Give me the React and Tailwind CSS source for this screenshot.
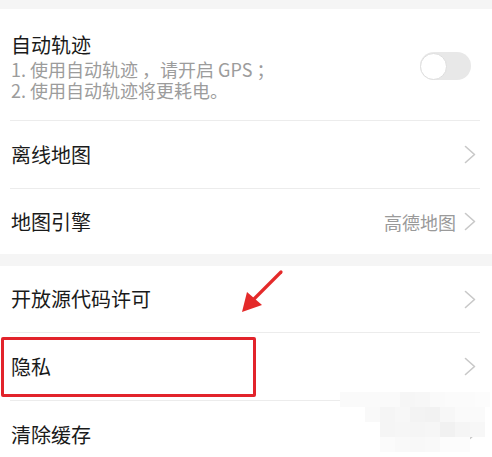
import React from "react";

const font = { fontFamily: '"Noto Sans CJK SC", "Noto Sans", sans-serif' };

function Chevron() {
  return (
    <svg width="12" height="19" viewBox="0 0 12 19" className="shrink-0">
      <path d="M1.5 1.5 L10.5 9.5 L1.5 17.5" fill="none" stroke="#c8c8c8" strokeWidth="1.6" strokeLinecap="round" strokeLinejoin="round" />
    </svg>
  );
}

function Row({ title, right, border = true, h }) {
  return (
    <div className={`ml-[10px] mr-[12px] flex items-center justify-between pl-[1px] pr-[4px] ${h} ${border ? "border-b border-[#ececec]" : ""}`}>
      <span className="text-[20px] leading-[28px] text-[#1a1a1a]">{title}</span>
      <div className="flex items-center gap-[8px]">
        {right && <span className="text-[18px] leading-[24px] text-[#9a9a9a]">{right}</span>}
        <Chevron />
      </div>
    </div>
  );
}

const mosaic = [
  { y: 392, cells: [[340, "#fafafa"], [355, "#fafafa"], [370, "#fafafa"], [385, "#fafafa"], [400, "#f6f6f6"], [415, "#f7f7f7"], [430, "#fafafa"], [445, "#fbfbfb"], [460, "#fbfbfb"], [475, "#fcfcfc"]] },
  { y: 407, cells: [[365, "#f9f9f9"], [380, "#f5f5f5"], [395, "#f7f7f7"], [410, "#f3f3f3"], [425, "#f2f2f2"], [440, "#f7f7f7"], [455, "#fafafa"], [470, "#fafafa"]] },
  { y: 422, cells: [[380, "#f5f5f5"], [395, "#f6f6f6"], [410, "#f5f5f5"], [425, "#f6f6f6"], [440, "#f1f1f1"], [455, "#f5f5f5"], [470, "#f7f7f7"]] },
  { y: 437, cells: [[380, "#fbfbfb"], [395, "#f9f9f9"], [410, "#f8f8f8"], [425, "#f9f9f9"], [440, "#fcfcfc"], [455, "#fcfcfc"]] },
];

export default function App() {
  return (
    <div className="relative w-[492px] h-[457px] overflow-hidden bg-[#f5f5f5]" style={font}>
      <div className="h-[9px]" />
      <div className="bg-white">
        <div className="ml-[10px] mr-[12px] border-b border-[#ececec] pl-[1px] pr-[9px] pt-[22px] pb-[19px] flex items-center justify-between">
          <div>
            <div className="text-[20px] leading-[28px] text-[#1a1a1a]">自动轨迹</div>
            <div className="text-[18px] leading-[21px] text-[#9c9c9c]">
              <div>1. 使用自动轨迹 ，请开启 GPS ；</div>
              <div>2. 使用自动轨迹将更耗电。</div>
            </div>
          </div>
          <div className="w-[51px] h-[28px] rounded-full bg-[#e8e8e8] flex items-center">
            <div className="w-[27px] h-[27px] rounded-full bg-white border border-[#dedede]" />
          </div>
        </div>
        <Row title="离线地图" h="h-[68px]" />
        <Row title="地图引擎" right="高德地图" h="h-[65px]" border={false} />
      </div>
      <div className="h-[12px]" />
      <div className="bg-white pb-[20px]">
        <Row title="开放源代码许可" h="h-[67px]" />
        <Row title="隐私" h="h-[68px]" />
        <Row title="清除缓存" h="h-[67px]" border={false} />
      </div>

      {mosaic.map((r) =>
        r.cells.map(([x, c]) => (
          <div key={`${r.y}-${x}`} className="absolute w-[15px] h-[15px]" style={{ left: x, top: r.y, background: c }} />
        ))
      )}

      <div className="absolute left-[1px] top-[337px] w-[255px] h-[60px] border-[3px] border-[#e2232b] rounded-[2px]" />

      <svg className="absolute left-0 top-0" width="492" height="457" viewBox="0 0 492 457">
        <line x1="281" y1="272" x2="254" y2="299" stroke="#e42a2a" strokeWidth="3.2" strokeLinecap="round" />
        <polygon points="242,312 247,292 262,305" fill="#e42a2a" />
      </svg>
    </div>
  );
}
